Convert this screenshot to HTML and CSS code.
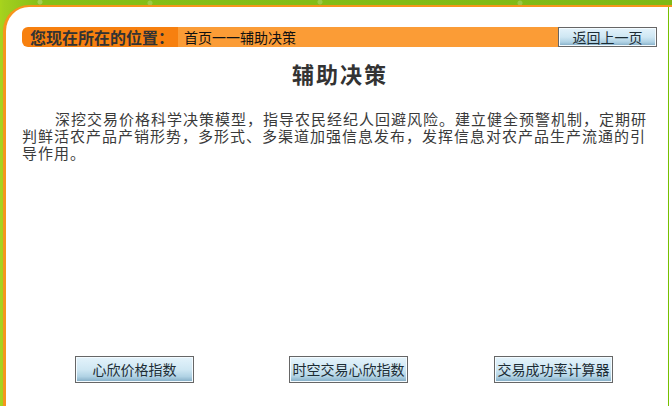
FILE: index.html
```html
<!DOCTYPE html>
<html lang="zh-CN">
<head>
<meta charset="utf-8">
<title>辅助决策</title>
<link rel="stylesheet" href="styles.css">
</head>
<body>
<div class="wrap">
  <div class="panel">
    <div class="content">
      <div class="locbar">
        <div class="loc-label">您现在所在的位置：</div>
        <div class="loc-path">首页一一辅助决策</div>
        <button class="btn btn-back" type="button">返回上一页</button>
      </div>
      <h1 class="title">辅助决策</h1>
      <p class="desc">深挖交易价格科学决策模型，指导农民经纪人回避风险。建立健全预警机制，定期研判鲜活农产品产销形势，多形式、多渠道加强信息发布，发挥信息对农产品生产流通的引导作用。</p>
      <div class="actions">
        <button class="btn btn-big" type="button">心欣价格指数</button>
        <button class="btn btn-big gap1" type="button">时空交易心欣指数</button>
        <button class="btn btn-big gap2" type="button">交易成功率计算器</button>
      </div>
    </div>
  </div>
</div>
</body>
</html>
```
FILE: styles.css
```css
html, body {
  margin: 0;
  padding: 0;
  background: #ffffff;
}
body {
  font-family: "Noto Sans CJK SC", "Liberation Sans", sans-serif;
  color: #333;
}
.wrap {
  width: 672px;
  height: 406px;
  overflow: hidden;
  padding: 5px 0 0 3px;
  box-sizing: border-box;
  background:
    radial-gradient(circle at 40px 2px, rgba(255,255,255,0.25) 0 2px, transparent 3px),
    radial-gradient(circle at 150px 3px, rgba(255,255,255,0.2) 0 2px, transparent 3px),
    radial-gradient(circle at 320px 2px, rgba(255,255,255,0.2) 0 2px, transparent 3px),
    radial-gradient(circle at 520px 3px, rgba(255,255,255,0.2) 0 2px, transparent 3px),
    linear-gradient(90deg, #a8d41c 0, #a2cf1e 4px, #86bf18 40px, #7fb816 100%);
}
.panel {
  height: 100%;
  background: #fff;
  border-top: 2px solid #f7941d;
  border-left: 3px solid #f7941d;
  border-top-left-radius: 26px;
  padding-right: 3px;
  box-sizing: border-box;
}
.content {
  height: 100%;
  border-right: 1px solid #77c000;
  padding-top: 20px;
  box-sizing: border-box;
}
.locbar {
  display: flex;
  align-items: stretch;
  height: 20px;
  margin-left: 16px;
  margin-right: 11px;
}
.loc-label {
  width: 156px;
  box-sizing: border-box;
  padding-left: 8px;
  background: #f7800f;
  border-radius: 6px 0 0 6px;
  font-weight: bold;
  font-size: 16px;
  line-height: 20px;
  color: #333;
  white-space: nowrap;
}
.loc-path {
  flex: 1;
  background: #fb9c36;
  padding-left: 6px;
  font-size: 14px;
  line-height: 20px;
  color: #111;
  white-space: nowrap;
}
.btn {
  font-family: "Noto Sans CJK SC", "Liberation Sans", sans-serif;
  border: 1px solid #666;
  box-shadow: inset 0 0 0 1px #f4fbff;
  background: linear-gradient(180deg, #e4f3fb 0%, #cfe7f3 50%, #b0d2e4 78%, #7fa9c3 100%);
  color: #1c2c34;
  padding: 0;
  margin: 0;
  box-sizing: border-box;
  white-space: nowrap;
  cursor: pointer;
}
.btn-back {
  width: 99px;
  height: 20px;
  font-size: 14px;
  line-height: 18px;
}
.title {
  margin: 12px 0 0 0;
  padding-left: 6px;
  text-align: center;
  font-size: 22px;
  line-height: 28px;
  letter-spacing: 2px;
  font-weight: bold;
  color: #333;
}
.desc {
  margin: 23px 0 0 16px;
  width: 630px;
  font-size: 15px;
  line-height: 17px;
  letter-spacing: 1px;
  text-indent: 33px;
  color: #3a3a3a;
}
.actions {
  display: flex;
  margin-top: 195px;
  padding-left: 69px;
}
.btn-big {
  width: 119px;
  height: 27px;
  font-size: 14px;
  line-height: 25px;
}
.gap1 {
  margin-left: 95px;
}
.gap2 {
  margin-left: 86px;
}
```
